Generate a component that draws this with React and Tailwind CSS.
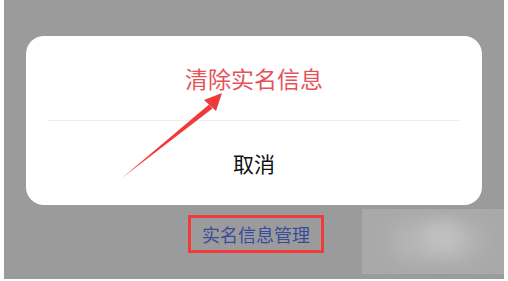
export default function App() {
  const cjk = { fontFamily: '"Noto Sans CJK SC", "Noto Sans", sans-serif' };
  return (
    <div className="relative w-[508px] h-[281px] bg-white overflow-hidden" style={cjk}>
      <div className="ml-[4px] w-[500px] h-[279px] bg-[#9b9b9b] pt-[36px] flex flex-col items-center">
        <div className="w-[456px] h-[169px] bg-white rounded-[18px] flex flex-col">
          <div className="h-[84px] flex items-center justify-center text-[23px] text-[#e5525a] leading-none">
            清除实名信息
          </div>
          <div className="mx-[22px] h-px bg-[#eeeeee]" />
          <div className="flex-1 flex items-center justify-center text-[21px] text-[#111111] leading-none">
            取消
          </div>
        </div>
        <div className="mt-[10px] ml-[4px] w-[136px] h-[38px] border-[3px] border-[#ee3b3b] flex items-center justify-center text-[18px] text-[#3a4b9b] leading-none">
          实名信息管理
        </div>
      </div>
      <div className="absolute left-[362px] top-[209px] w-[142px] h-[65px] bg-[#a9a9a9] overflow-hidden">
        <div className="absolute left-[30px] top-[12px] w-[90px] h-[40px] rounded-full bg-[#b6b6b6] blur-[10px]" />
        <div className="absolute left-[60px] top-[14px] w-[40px] h-[30px] rounded-full bg-[#c0c0c0] blur-[8px]" />
      </div>
      <svg className="absolute left-0 top-0" width="508" height="281" viewBox="0 0 508 281">
        <polygon points="122,178 209,104.5 212.5,108.5" fill="#f03a3a" />
        <polygon points="222,93 204,100 216,111" fill="#f03a3a" />
      </svg>
    </div>
  );
}
